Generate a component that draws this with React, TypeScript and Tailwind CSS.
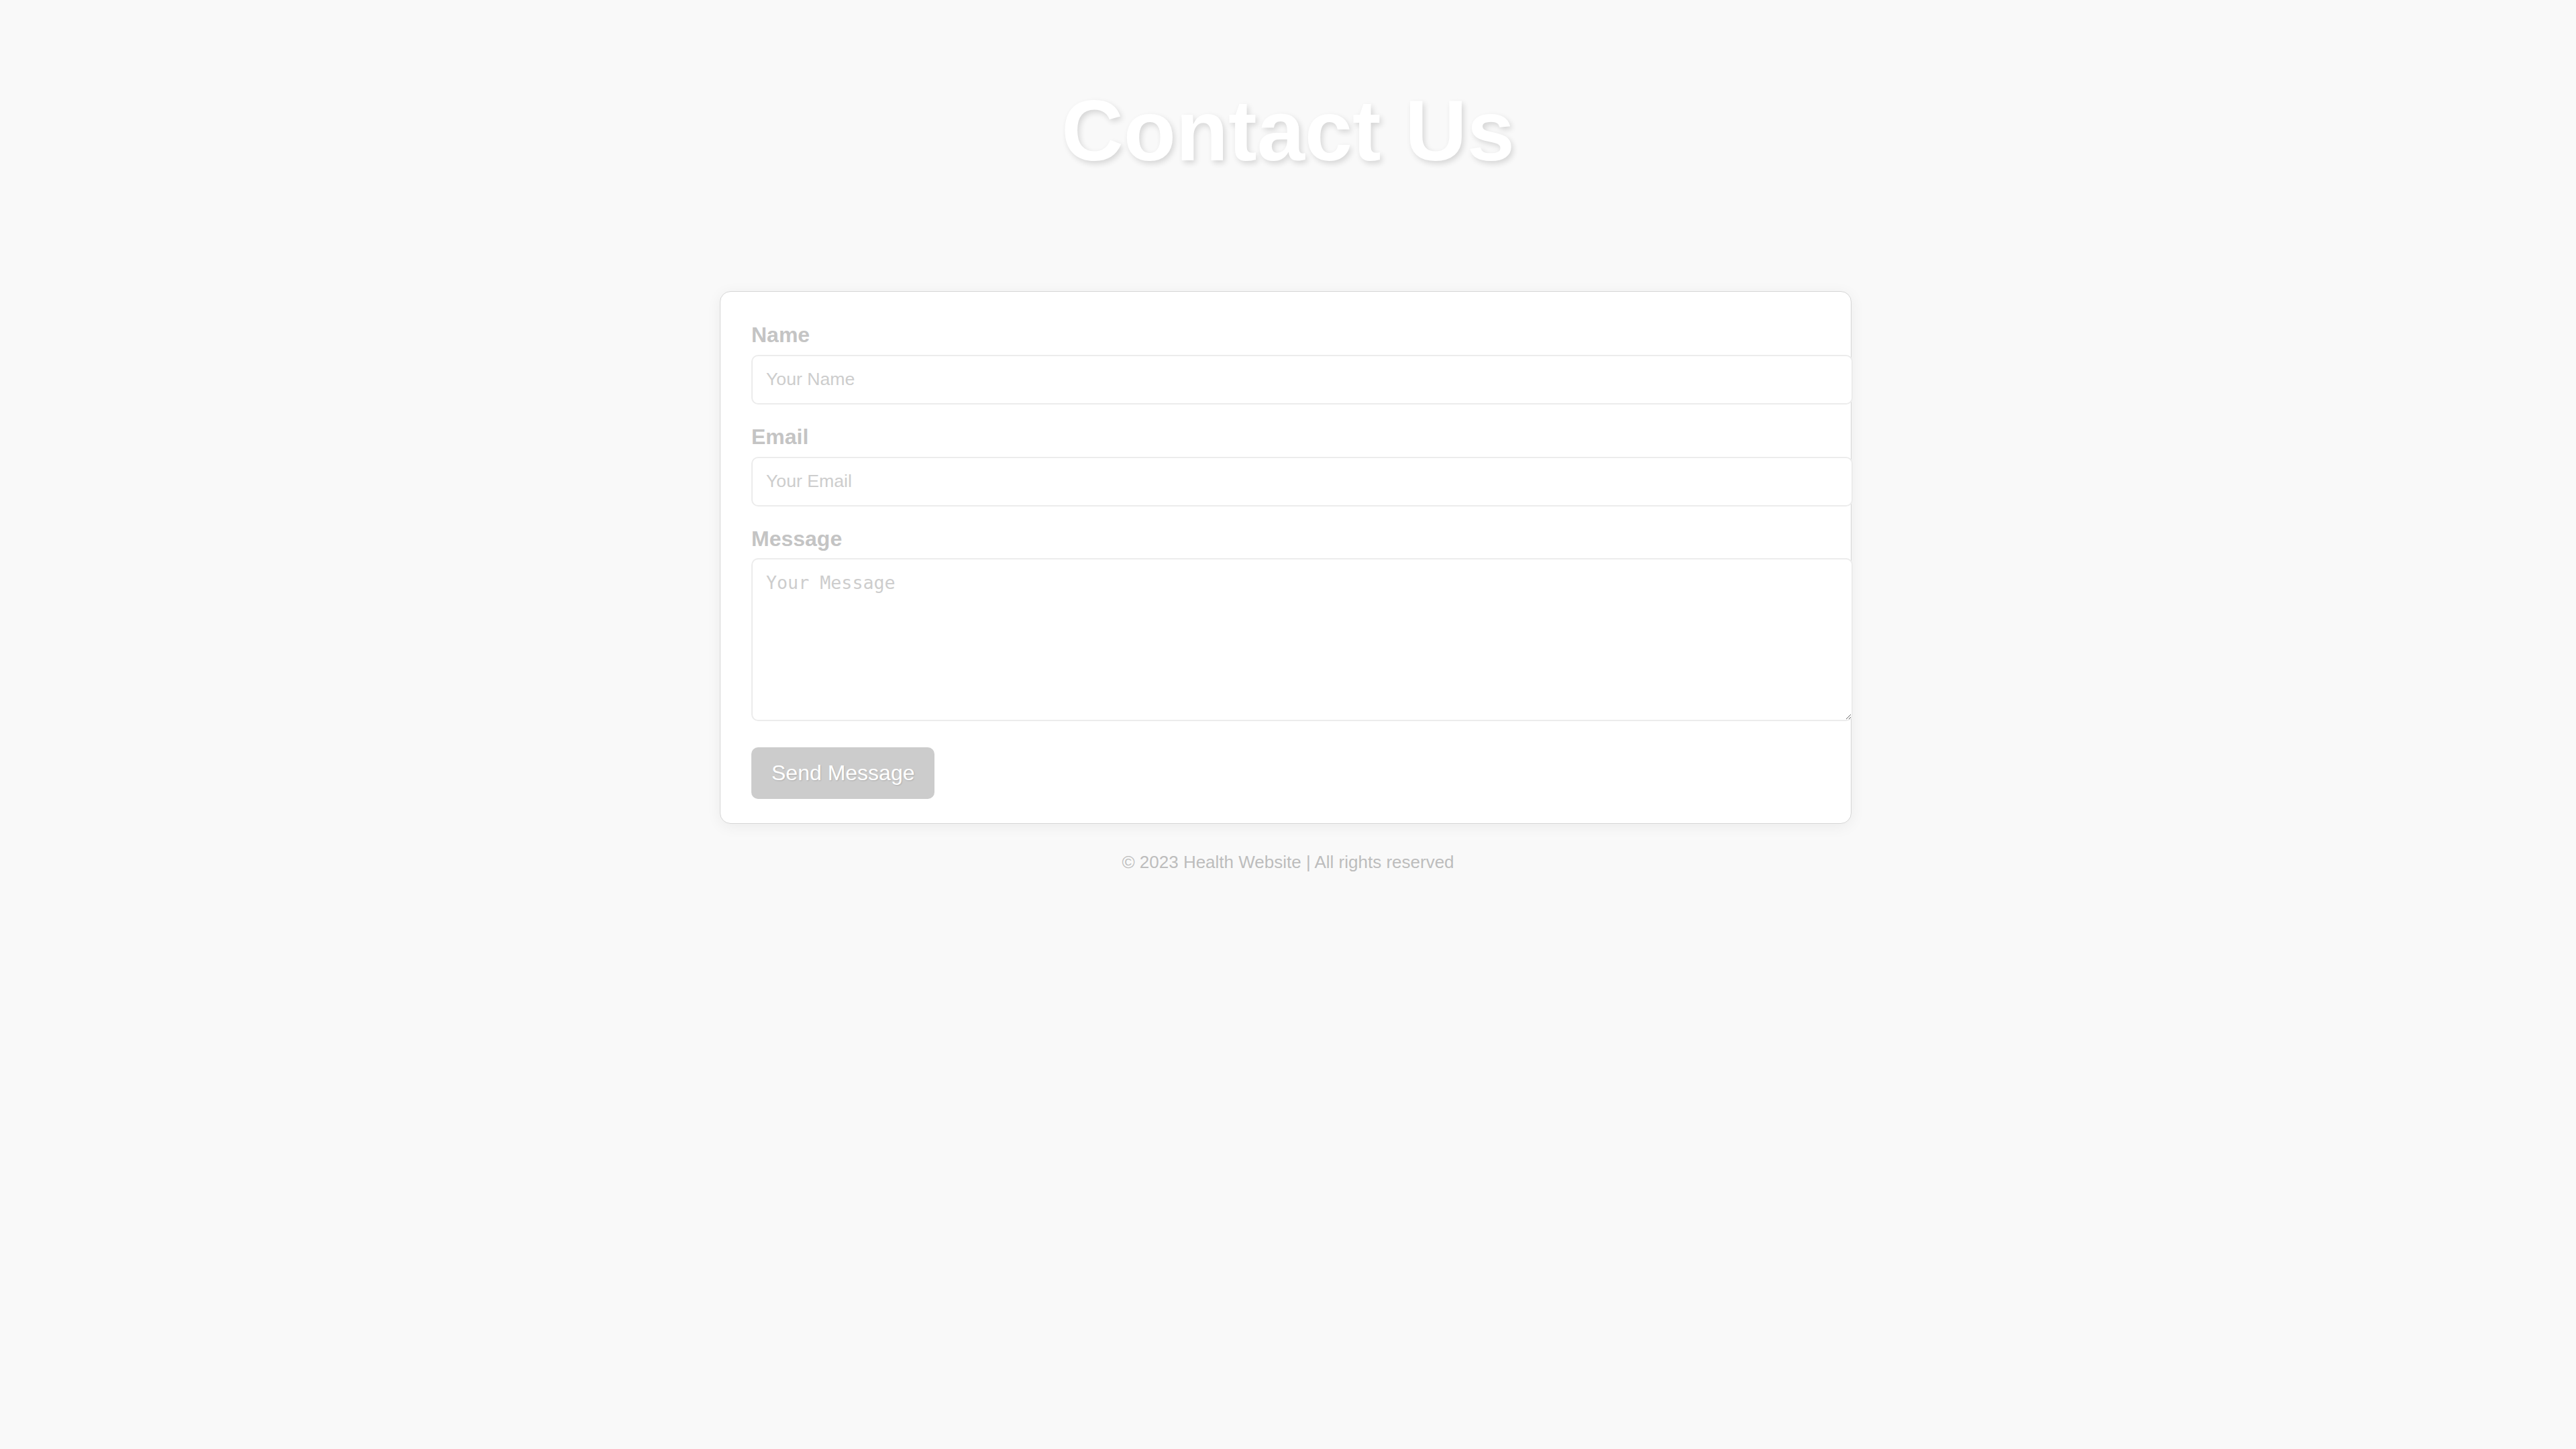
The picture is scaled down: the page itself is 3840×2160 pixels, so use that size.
import React from "react";

const FIELDS = [
    { id: "name", label: "Name", type: "text", placeholder: "Your Name" },
    { id: "email", label: "Email", type: "email", placeholder: "Your Email" },
];

export default function App() {
    return (
        <main className="min-h-screen bg-[#f9f9f9] font-['Liberation_Sans',Arial,sans-serif] flex flex-col items-center pt-[131px]">
            <h1 className="text-[128px] leading-none font-bold text-white [text-shadow:3px_4px_8px_rgba(0,0,0,0.14)]">
                Contact Us
            </h1>

            <form className="mt-[175px] mr-[7px] w-[1687px] bg-white border border-[#d6d6d6] rounded-[16px] shadow-[0_4px_22px_rgba(0,0,0,0.06)] pl-[46px] pt-[46px] pb-[36px]">
                {FIELDS.map((f) => (
                    <div key={f.id}>
                        <label htmlFor={f.id} className="block text-[32px] leading-[1.15] font-bold text-[#c4c4c4] mb-[11px]">
                            {f.label}
                        </label>
                        <input
                            id={f.id}
                            type={f.type}
                            placeholder={f.placeholder}
                            className="block w-[1642px] h-[74px] mb-[30px] px-[20px] border-2 border-[#ececec] rounded-[10px] bg-white text-[26.67px] font-['Liberation_Sans',Arial,sans-serif] placeholder:text-[#cdcdcd] outline-none"
                        />
                    </div>
                ))}

                <label htmlFor="message" className="block text-[32px] leading-[1.15] font-bold text-[#c4c4c4] mb-[11px]">
                    Message
                </label>
                <textarea
                    id="message"
                    placeholder="Your Message"
                    className="block w-[1642px] h-[243px] px-[20px] py-[20px] border-2 border-[#ececec] rounded-[10px] bg-white text-[26.67px] leading-[1.15] font-['DejaVu_Sans_Mono',monospace] placeholder:text-[#cdcdcd] outline-none"
                />

                <button
                    type="submit"
                    className="mt-[39px] h-[77px] px-[30px] bg-[#cccccc] rounded-[10px] text-white text-[32px] leading-[1.15] [text-shadow:1px_1px_2px_rgba(0,0,0,0.15)]"
                >
                    Send Message
                </button>
            </form>

            <footer className="mt-[43px] text-[26px] leading-[1.15] text-[#bdbdbd]">
                © 2023 Health Website | All rights reserved
            </footer>
        </main>
    );
}
